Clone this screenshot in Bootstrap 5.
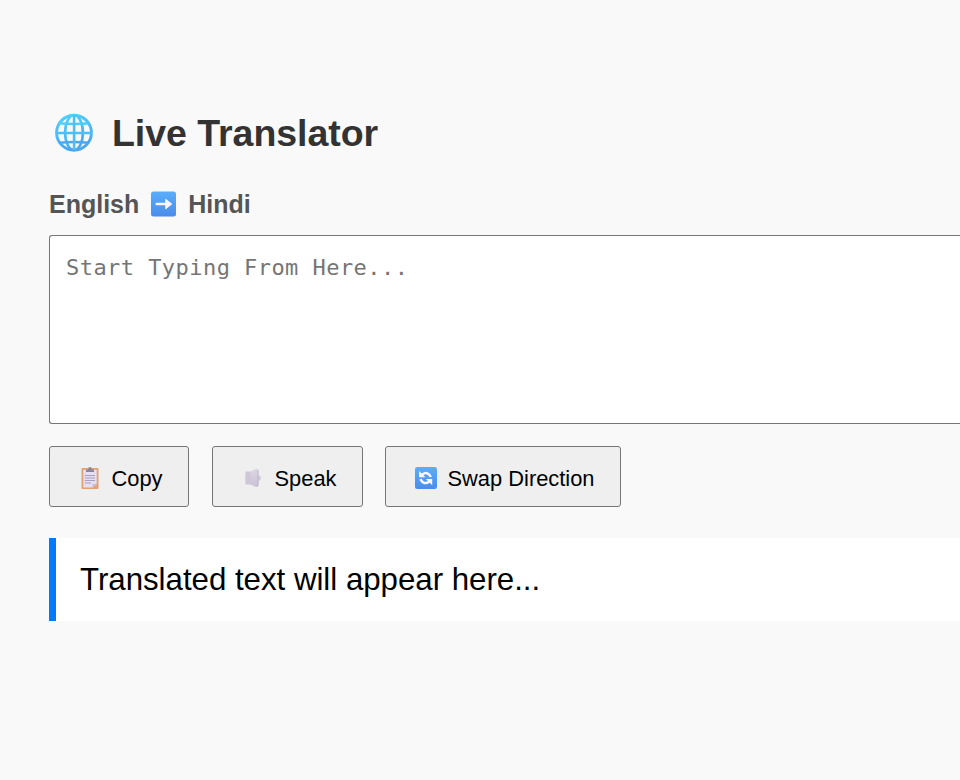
<!DOCTYPE html>
<html lang="en">
<head>
<meta charset="utf-8">
<meta name="viewport" content="width=device-width, initial-scale=1">
<title>Live Translator</title>
<link href="https://cdn.jsdelivr.net/npm/bootstrap@5.3.0/dist/css/bootstrap.min.css" rel="stylesheet">
<style>
body{background:#f9f9f9;color:#000;font-family:"Liberation Sans",Arial,sans-serif}
.translator{padding:109px 0 0 49px}
.app-title{font-size:37.5px;line-height:48px;color:#333;gap:18px;padding-left:5px}
.app-title span{letter-spacing:-.04px}
.direction{font-size:25px;line-height:30px;color:#555;gap:12px;margin-top:32px}
.source-text{height:189px;margin-top:16px;padding:16px;border:1px solid #767676;border-radius:3px 0 0 3px;font:22px/31px "DejaVu Sans Mono",monospace;letter-spacing:.45px;resize:none}
.source-text::placeholder{color:#757575;opacity:1}
.source-text:focus{outline:0}
.actions{margin-top:22px}
.action{--bs-btn-color:#000;--bs-btn-bg:#efefef;--bs-btn-border-color:#767676;--bs-btn-hover-bg:#e5e5e5;--bs-btn-hover-color:#000;--bs-btn-border-radius:3px;--bs-btn-font-size:21.875px;--bs-btn-line-height:25px;height:61px;padding:3px 0 0 4px}
.action svg{margin-right:10px}
.copy{width:140px;margin-right:23px}
.speak{width:151px;margin-right:22px}
.swap{width:236px}
.result{height:83px;margin-top:31px;padding:2px 0 0 24px;border-left:7px solid #007bff;font-size:31.25px;letter-spacing:-.02px}
</style>
</head>
<body class="overflow-hidden">
<main class="translator">
  <h1 class="app-title d-flex align-items-center fw-bold mb-0">
    <svg width="40" height="40" viewBox="0 0 40 40" fill="none" aria-hidden="true">
      <defs><linearGradient id="globe" x1="0" y1="0" x2="0.3" y2="1"><stop stop-color="#50d2ff"/><stop offset="1" stop-color="#4ba6f0"/></linearGradient></defs>
      <circle cx="20" cy="19.700" r="17.500" fill="#f9f9f9"/>
      <g stroke="url(#globe)" stroke-width="2.600">
        <circle cx="20" cy="19.700" r="17.400" stroke-width="2.900"/>
        <ellipse cx="20" cy="19.700" rx="8.900" ry="17.400"/>
        <path d="M5 10.200Q20 11.800 35 10.200M5 29.700Q20 28.300 35 29.700"/>
      </g>
      <path d="M2 20H38M20.100 2V37" stroke="#4cbff9" stroke-width="2.600"/>
    </svg>
    <span>Live Translator</span>
  </h1>
  <div class="direction d-flex align-items-center fw-bold">
    <span>English</span>
    <svg width="25" height="26" viewBox="0 0 25 26" aria-hidden="true">
      <defs><linearGradient id="tile" x2="0" y2="1"><stop stop-color="#5aaefb"/><stop offset="1" stop-color="#4a8ce9"/></linearGradient></defs>
      <rect y=".5" width="25" height="25" rx="2.5" fill="url(#tile)"/>
      <path d="M5.700 13H16" fill="none" stroke="#fff5ff" stroke-width="2.600" stroke-linecap="round"/>
      <path d="M14.700 8.200 20.800 13l-6.100 4.900Z" fill="#fff5ff" stroke="#fff5ff" stroke-width=".8" stroke-linejoin="round"/>
    </svg>
    <span>Hindi</span>
  </div>
  <textarea class="source-text d-block w-100 bg-white border-end-0" placeholder="Start Typing From Here..." aria-label="Text to translate"></textarea>
  <div class="actions d-flex">
    <button type="button" class="btn action copy d-flex align-items-center justify-content-center">
      <svg width="22" height="22" viewBox="0 0 22 22" aria-hidden="true">
        <rect x="2.5" y="1" width="17" height="21" rx="1" fill="#e5a06f"/>
        <path d="M4.3 2.7H17.7V17l-4.1 3.4H4.3Z" fill="#e6def2"/>
        <path d="M13.4 20.6V17H17.8Z" fill="#c9bdd5"/>
        <path d="M7 4.9V2.4H9.2Q9.2 0 11 0t1.8 2.4H15V4.9Z" fill="#8e8494"/>
        <path d="M5.8 8.5H16M5.8 11H16M5.8 13.5H16M5.8 16H12" stroke="#aaa0bb"/>
      </svg>
      <span>Copy</span>
    </button>
    <button type="button" class="btn action speak d-flex align-items-center justify-content-center">
      <svg width="22" height="22" viewBox="0 0 22 22" aria-hidden="true">
        <defs><linearGradient id="horn" x2="0" y2="1"><stop stop-color="#dcd6e4"/><stop offset="1" stop-color="#cbc1d6"/></linearGradient></defs>
        <circle cx="15.300" cy="11" r="2.700" fill="#d3ccda"/>
        <path d="M2.500 4.500H8V17.500H2.500Q1.700 11 2.500 4.500Z" fill="#cec7d8"/>
        <path d="M7.200 4.700 13 1.800Q15.300 1.300 15.300 3.300V18.500Q15.300 20.500 13 20L7.200 17.300Z" fill="url(#horn)"/>
        <path d="M15 3.200V18.700" stroke="#b9adc3" stroke-width=".8"/>
      </svg>
      <span>Speak</span>
    </button>
    <button type="button" class="btn action swap d-flex align-items-center justify-content-center">
      <svg width="22" height="22" viewBox="0 0 22 22" aria-hidden="true">
        <rect width="22" height="22" rx="2.300" fill="url(#tile)"/>
        <path d="M7 7.700Q12.500 3.600 15.900 10M14.300 14.500Q8.800 18.600 5.400 12.200" fill="none" stroke="#fff5ff" stroke-width="2.500"/>
        <path d="M4.100 3.900V10.200H10.400ZM17.200 18.300V12H10.900Z" fill="#fff5ff"/>
      </svg>
      <span>Swap Direction</span>
    </button>
  </div>
  <div class="result bg-white d-flex align-items-center"><span>Translated text will appear here...</span></div>
</main>
<script src="https://cdn.jsdelivr.net/npm/bootstrap@5.3.0/dist/js/bootstrap.bundle.min.js"></script>
</body>
</html>
